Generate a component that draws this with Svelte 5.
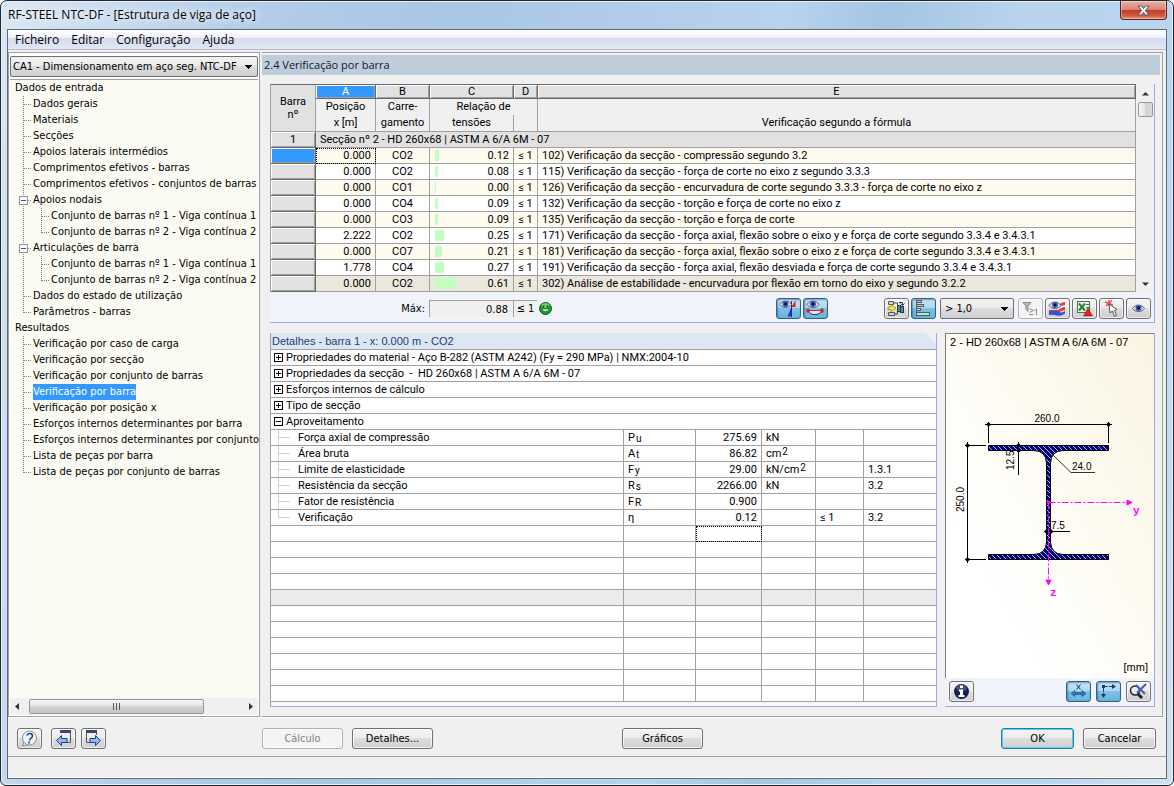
<script>
     let selected = $state('Verificação por barra');
     let activeRow = $state(0);

     const menu = ['Ficheiro', 'Editar', 'Configuração', 'Ajuda'];

     const tree = [
          { label: 'Dados de entrada', guides: [] },
          { label: 'Dados gerais', guides: ['tee'] },
          { label: 'Materiais', guides: ['tee'] },
          { label: 'Secções', guides: ['tee'] },
          { label: 'Apoios laterais intermédios', guides: ['tee'] },
          { label: 'Comprimentos efetivos - barras', guides: ['tee'] },
          { label: 'Comprimentos efetivos - conjuntos de barras', guides: ['tee'] },
          { label: 'Apoios nodais', guides: ['minus'] },
          { label: 'Conjunto de barras nº 1 - Viga contínua 1', guides: ['line', 'tee'] },
          { label: 'Conjunto de barras nº 2 - Viga contínua 2', guides: ['line', 'end'] },
          { label: 'Articulações de barra', guides: ['minus'] },
          { label: 'Conjunto de barras nº 1 - Viga contínua 1', guides: ['line', 'tee'] },
          { label: 'Conjunto de barras nº 2 - Viga contínua 2', guides: ['line', 'end'] },
          { label: 'Dados do estado de utilização', guides: ['tee'] },
          { label: 'Parâmetros - barras', guides: ['end'] },
          { label: 'Resultados', guides: [] },
          { label: 'Verificação por caso de carga', guides: ['tee'] },
          { label: 'Verificação por secção', guides: ['tee'] },
          { label: 'Verificação por conjunto de barras', guides: ['tee'] },
          { label: 'Verificação por barra', guides: ['tee'] },
          { label: 'Verificação por posição x', guides: ['tee'] },
          { label: 'Esforços internos determinantes por barra', guides: ['tee'] },
          { label: 'Esforços internos determinantes por conjunto', guides: ['tee'] },
          { label: 'Lista de peças por barra', guides: ['tee'] },
          { label: 'Lista de peças por conjunto de barras', guides: ['end'] }
     ];

     const checks = [
          { x: '0.000', lc: 'CO2', ratio: '0.12', text: '102) Verificação da secção - compressão segundo 3.2' },
          { x: '0.000', lc: 'CO2', ratio: '0.08', text: '115) Verificação da secção - força de corte no eixo z segundo 3.3.3' },
          { x: '0.000', lc: 'CO1', ratio: '0.00', text: '126) Verificação da secção - encurvadura de corte segundo 3.3.3 - força de corte no eixo z' },
          { x: '0.000', lc: 'CO4', ratio: '0.09', text: '132) Verificação da secção - torção e força de corte no eixo z' },
          { x: '0.000', lc: 'CO3', ratio: '0.09', text: '135) Verificação da secção - torção e força de corte' },
          { x: '2.222', lc: 'CO2', ratio: '0.25', text: '171) Verificação da secção - força axial, flexão sobre o eixo y e força de corte segundo 3.3.4 e 3.4.3.1' },
          { x: '0.000', lc: 'CO7', ratio: '0.21', text: '181) Verificação da secção - força axial, flexão sobre o eixo z e força de corte segundo 3.3.4 e 3.4.3.1' },
          { x: '1.778', lc: 'CO4', ratio: '0.27', text: '191) Verificação da secção - força axial, flexão desviada e força de corte segundo 3.3.4 e 3.4.3.1' },
          { x: '0.000', lc: 'CO2', ratio: '0.61', text: '302) Análise de estabilidade - encurvadura por flexão em torno do eixo y segundo 3.2.2' }
     ];

     const groups = [
          { label: 'Propriedades do material - Aço B-282 (ASTM A242) (Fy = 290 MPa) | NMX:2004-10', open: false },
          { label: 'Propriedades da secção  -  HD 260x68 | ASTM A 6/A 6M - 07', open: false },
          { label: 'Esforços internos de cálculo', open: false },
          { label: 'Tipo de secção', open: false },
          { label: 'Aproveitamento', open: true }
     ];

     const details = [
          { label: 'Força axial de compressão', sym: 'P', sub: 'u', value: '275.69', unit: 'kN' },
          { label: 'Área bruta', sym: 'A', sub: 't', value: '86.82', unit: 'cm', sup: '2' },
          { label: 'Limite de elasticidade', sym: 'F', sub: 'y', value: '29.00', unit: 'kN/cm', sup: '2', ref: '1.3.1' },
          { label: 'Resistência da secção', sym: 'R', sub: 's', value: '2266.00', unit: 'kN', ref: '3.2' },
          { label: 'Fator de resistência', sym: 'F', sub: 'R', value: '0.900' },
          { label: 'Verificação', sym: 'η', value: '0.12', limit: '≤ 1', ref: '3.2' }
     ];

     const emptyRows = Array.from({ length: 11 }, (_, i) => i);

     const barWidth = (ratio) => Math.max(1, Math.round(Number(ratio) * 34));
</script>

{#snippet guide(kind)}
     <svg class="guide" width="19" height="16" viewBox="0 0 19 16" fill="none" stroke="#808080" stroke-dasharray="1 1" shape-rendering="crispEdges">
          <path d={kind === 'end' ? 'M8.5 0V9' : 'M8.5 0V16'} />
          {#if kind !== 'line'}
               <path d="M9 8.5H17" />
          {/if}
          {#if kind === 'minus'}
               <rect x="4.5" y="4.5" width="8" height="8" rx="1" fill="#fff" stroke="#919191" stroke-dasharray="none" />
               <path d="M6 8.5H11" stroke="#3b4fa8" stroke-dasharray="none" />
          {/if}
     </svg>
{/snippet}

{#snippet eye(x, y)}
     <g transform="translate({x} {y})">
          <path d="M0 4.5C3 0 9 0 12 4.5C9 8.5 3 8.5 0 4.5Z" fill="#dfe3f2" stroke="#555d80" />
          <circle cx="6" cy="4" r="3" fill="#3c58b4" />
          <circle cx="6" cy="4" r="1.4" fill="#0b1238" />
     </g>
{/snippet}

<div class="window">
     <header class="titlebar">
          <h1>RF-STEEL NTC-DF - [Estrutura de viga de aço]</h1>
          <button class="close" aria-label="Fechar">
               <svg width="13" height="11" viewBox="0 0 13 11">
                    <path d="M1 1H4.5L6.5 3.5L8.5 1H12L8.5 5.5L12 10H8.5L6.5 7.5L4.5 10H1L4.5 5.5Z" fill="#f4f4f4" stroke="#54566a" />
               </svg>
          </button>
     </header>

     <div class="client">
          <nav class="menu">
               {#each menu as item}
                    <button>{item}</button>
               {/each}
          </nav>

          <div class="main">
               <aside class="sidebar">
                    <select class="case" aria-label="Caso de dimensionamento">
                         <option>CA1 - Dimensionamento em aço seg. NTC-DF</option>
                    </select>
                    <ul class="tree">
                         {#each tree as node}
                              <li>
                                   {#each node.guides as kind}
                                        {@render guide(kind)}
                                   {/each}
                                   <button class="node" class:selected={node.label === selected} onclick={() => (selected = node.label)}>{node.label}</button>
                              </li>
                         {/each}
                    </ul>
                    <div class="hscroll">
                         <svg width="15" height="15" viewBox="0 0 15 15"><path d="M9 4V11L5 7.5Z" fill="#333" /></svg>
                         <div class="track">
                              <div class="thumb"><i></i><i></i><i></i></div>
                         </div>
                         <svg width="15" height="15" viewBox="0 0 15 15"><path d="M6 4V11L10 7.5Z" fill="#333" /></svg>
                    </div>
               </aside>

               <section class="content">
                    <h2>2.4 Verificação por barra</h2>

                    <div class="results">
                         <div class="results-body">
                              <table class="checks">
                                   <colgroup>
                                        <col style="width: 45px" />
                                        <col style="width: 60px" />
                                        <col style="width: 54px" />
                                        <col style="width: 84px" />
                                        <col style="width: 24px" />
                                        <col />
                                   </colgroup>
                                   <thead>
                                        <tr class="letters">
                                             <th class="corner" rowspan="2">Barra<br />nº</th>
                                             <th class="active">A</th>
                                             <th>B</th>
                                             <th>C</th>
                                             <th>D</th>
                                             <th>E</th>
                                        </tr>
                                        <tr class="titles">
                                             <th>Posição<br />x [m]</th>
                                             <th>Carre-<br />gamento</th>
                                             <th class="ratio-title" colspan="2">
                                                  <span>Relação de</span>
                                                  <span class="second">tensões</span>
                                             </th>
                                             <th class="formula">Verificação segundo a fórmula</th>
                                        </tr>
                                   </thead>
                                   <tbody>
                                        <tr class="section">
                                             <th>1</th>
                                             <td colspan="5">Secção nº 2 - HD 260x68 | ASTM A 6/A 6M - 07</td>
                                        </tr>
                                        {#each checks as row, i}
                                             <tr class:active={i === activeRow} class:last={i === checks.length - 1} onclick={() => (activeRow = i)}>
                                                  <th></th>
                                                  <td class="num" class:focus={i === activeRow}>{row.x}</td>
                                                  <td class="center">{row.lc}</td>
                                                  <td>
                                                       <div class="ratio">
                                                            <span class="bar" style="width: {barWidth(row.ratio)}px"></span>
                                                            <span>{row.ratio}</span>
                                                       </div>
                                                  </td>
                                                  <td class="center">≤ 1</td>
                                                  <td>{row.text}</td>
                                             </tr>
                                        {/each}
                                   </tbody>
                              </table>
                              <div class="vscroll">
                                   <svg width="15" height="15" viewBox="0 0 15 15"><path d="M4 9.5H11L7.5 6Z" fill="#333" /></svg>
                                   <div class="vthumb"></div>
                                   <svg class="down" width="15" height="15" viewBox="0 0 15 15"><path d="M4 5.5H11L7.5 9Z" fill="#333" /></svg>
                              </div>
                         </div>

                         <div class="toolbar">
                              <label for="max">Máx:</label>
                              <input id="max" class="max" value="0.88" readonly />
                              <span class="limit">≤ 1</span>
                              <svg class="smiley" width="13" height="13" viewBox="0 0 13 13">
                                   <circle cx="6.5" cy="6.5" r="6" fill="#1e9a2c" stroke="#0c5d18" />
                                   <ellipse cx="6.5" cy="3.5" rx="4" ry="2.5" fill="#7fdc7c" opacity="0.8" />
                                   <circle cx="4.5" cy="4.5" r="1" fill="#083d0e" />
                                   <circle cx="8.5" cy="4.5" r="1" fill="#083d0e" />
                                   <path d="M2.5 7Q6.5 12 10.5 7Z" fill="#e6f7e4" stroke="#083d0e" stroke-width="0.5" />
                              </svg>

                              <div class="tools">
                                   <button class="tool on" aria-label="Diagramas na estrutura">
                                        <svg width="23" height="19" viewBox="0 0 23 19">
                                             <path d="M18.5 1V8L14.5 8Z" fill="#e02424" />
                                             <path d="M14 9L10.5 17.5H14Z" fill="#2434d8" />
                                             <path d="M14.5 2V18" stroke="#26304c" />
                                             {@render eye(2.5, 1)}
                                        </svg>
                                   </button>
                                   <button class="tool on" aria-label="Diagramas nas barras">
                                        <svg width="23" height="19" viewBox="0 0 23 19">
                                             {@render eye(3, 1)}
                                             <path d="M4 11.5C6 17 16 17 18 11.5" fill="#d7e9f7" stroke="#203050" />
                                             <path d="M3 11.5H19" stroke="#e02020" />
                                             <path d="M2.5 9.5H5.5V13.5H2.5ZM16.5 9.5H19.5V13.5H16.5Z" fill="#d62020" />
                                        </svg>
                                   </button>
                                   <span class="spacer"></span>
                                   <button class="tool" aria-label="Barras coloridas">
                                        <svg width="23" height="19" viewBox="0 0 23 19">
                                             <path d="M3.5 2.5H8.5V5.5H3.5ZM3.5 13.5H9.5V16.5H3.5Z" fill="#d4d4d4" stroke="#555" />
                                             <path d="M3 8H6V5.5L11 9L6 12.5V10.500H3Z" fill="#f5ee52" stroke="#8d8718" stroke-width="0.8" />
                                             <path d="M9 4H12.5V6M10 15H12.5V12" fill="none" stroke="#444" />
                                             <rect x="12.500" y="6.500" width="3" height="6" fill="#3fa062" stroke="#334" />
                                             <rect x="15.500" y="7.500" width="3" height="6" fill="#3c8ac0" stroke="#334" />
                                             <path d="M14 3.500H17.500V6M15.500 4.500L17.500 6.500L19.500 4.500" fill="none" stroke="#333" />
                                        </svg>
                                   </button>
                                   <button class="tool on" aria-label="Barras de relação">
                                        <svg width="23" height="19" viewBox="0 0 23 19" fill="none" stroke="#4d5c66">
                                             <path d="M4.5 1V17.5" />
                                             <rect x="4.500" y="1.500" width="5" height="2" fill="#e5b9b9" />
                                             <rect x="4.500" y="5.500" width="7" height="2" fill="#e5b9b9" />
                                             <rect x="4.500" y="9.500" width="4" height="2" fill="#e9ecec" />
                                             <rect x="4.500" y="13.500" width="13" height="3" fill="#b9e8c4" />
                                        </svg>
                                   </button>
                                   <select class="threshold" aria-label="Filtro da relação">
                                        <option>&gt; 1,0</option>
                                   </select>
                                   <button class="tool" disabled aria-label="Filtrar superiores a 1">
                                        <svg width="23" height="19" viewBox="0 0 23 19" fill="none" stroke="#8d8d8d">
                                             <path d="M4 3.5H12L9 7V12.5L7 10.5V7Z" fill="#b9b9b9" />
                                             <path d="M10.5 9.500L14.500 11.500L10.500 13.500M10 15.500H14.500M15.500 11.500L17.500 10V16" />
                                        </svg>
                                   </button>
                                   <button class="tool" aria-label="Escala de cores">
                                        <svg width="23" height="19" viewBox="0 0 23 19">
                                             <path d="M12 6Q16 3 19 3V6Q16 6 13 8Z" fill="#e03a3a" />
                                             <path d="M3 11H12Q16 8 19 8V11Q16 11 12 14H3Z" fill="#e03a3a" />
                                             <path d="M3 13Q8 10.500 12 12.500T19 12V14.500Q15 17.500 11 16.500T3 16Z" fill="#2f55d0" />
                                             {@render eye(3, 2)}
                                        </svg>
                                   </button>
                                   <button class="tool" aria-label="Exportar para Excel">
                                        <svg width="23" height="19" viewBox="0 0 23 19">
                                             <rect x="4.500" y="2.500" width="12" height="11" fill="#e8f3e6" stroke="#3b7d3a" />
                                             <path d="M6 4.500L12 11.500M12 4.500L6 11.500" stroke="#27803a" stroke-width="2" />
                                             <path d="M13 5.500H16M13 8.500H16" stroke="#3b7d3a" />
                                             <path d="M15 9L19.500 17H10.500Z" fill="#e0222a" stroke="#7d1014" stroke-width="0.5" />
                                        </svg>
                                   </button>
                                   <button class="tool" aria-label="Selecionar no gráfico">
                                        <svg width="23" height="19" viewBox="0 0 23 19">
                                             <path d="M5 3L13 6M12 1.500L6 7M9 1V7" stroke="#e05050" stroke-width="1.500" />
                                             <path d="M9 5L10 14L12.500 12L14.500 17.500L16.500 16.500L14.500 11.500L17 10.500Z" fill="#f6f6f6" stroke="#555" />
                                        </svg>
                                   </button>
                                   <button class="tool" aria-label="Modo de visualização">
                                        <svg width="23" height="19" viewBox="0 0 23 19">{@render eye(5.5, 5)}</svg>
                                   </button>
                              </div>
                         </div>
                    </div>

                    <div class="lower">
                         <div class="details">
                              <h3>Detalhes - barra 1 - x: 0.000 m - CO2</h3>
                              <table>
                                   <colgroup>
                                        <col />
                                        <col style="width: 72px" />
                                        <col style="width: 66px" />
                                        <col style="width: 54px" />
                                        <col style="width: 48px" />
                                        <col style="width: 72px" />
                                   </colgroup>
                                   <tbody>
                                        {#each groups as group}
                                             <tr>
                                                  <td class="group" colspan="6">
                                                       <button aria-expanded={group.open}>
                                                            <svg width="10" height="10" viewBox="0 0 10 10" fill="none" stroke="#000" shape-rendering="crispEdges">
                                                                 <rect x="0.5" y="0.5" width="8" height="8" fill="#fff" />
                                                                 <path d={group.open ? 'M2 4.5H7' : 'M2 4.5H7M4.5 2V7'} />
                                                            </svg>
                                                            <span>{group.label}</span>
                                                       </button>
                                                  </td>
                                             </tr>
                                        {/each}
                                        {#each details as row, i}
                                             <tr>
                                                  <td class="item">
                                                       <div class="branch">
                                                            <svg width="26" height="15" viewBox="0 0 26 15" fill="none" stroke="#d0d0d0" shape-rendering="crispEdges">
                                                                 <path d={i === details.length - 1 ? 'M7.5 0V8' : 'M7.5 0V15'} />
                                                                 <path d="M8 7.5H19" />
                                                            </svg>
                                                            <span>{row.label}</span>
                                                       </div>
                                                  </td>
                                                  <td>{row.sym}<span class="sub">{row.sub ?? ''}</span></td>
                                                  <td class="num">{row.value}</td>
                                                  <td>{row.unit ?? ''}<span class="sup">{row.sup ?? ''}</span></td>
                                                  <td>{row.limit ?? ''}</td>
                                                  <td>{row.ref ?? ''}</td>
                                             </tr>
                                        {/each}
                                        {#each emptyRows as i}
                                             <tr class:shaded={i === 4}>
                                                  <td></td>
                                                  <td></td>
                                                  <td class:focus={i === 0}></td>
                                                  <td></td>
                                                  <td></td>
                                                  <td></td>
                                             </tr>
                                        {/each}
                                   </tbody>
                              </table>
                         </div>

                         <div class="profile">
                              <div class="drawing">
                                   <svg width="209" height="344" viewBox="0 0 209 344" font-family="Liberation Sans, sans-serif" font-size="10">
                                        <defs>
                                             <pattern id="hatch" width="5" height="5" patternUnits="userSpaceOnUse">
                                                  <rect width="5" height="5" fill="#00007c" />
                                                  <path d="M-1 -1L6 6M-1 4L1 6M4 -1L6 1" stroke="#b4b4dc" />
                                             </pattern>
                                        </defs>
                                        <text x="4" y="12" font-size="11">2 - HD 260x68 | ASTM A 6/A 6M - 07</text>

                                        <path
                                             d="M42.5 111.5H162.5V116.5H117Q105 117 104.5 129V208Q105 220 117 220.5H162.5V225.5H42.5V220.5H88Q100 220 100.5 208V129Q100 117 88 116.5H42.5Z"
                                             fill="url(#hatch)"
                                             stroke="#000"
                                        />

                                        <g stroke="#000" fill="none">
                                             <path d="M39 90.5H166M42.5 88V109M162.5 88V109" />
                                             <path d="M21.5 108V229M19 111.5H40M19 225.5H40" />
                                             <path d="M72.5 108V141" />
                                             <path d="M98 197.5H124" />
                                             <path d="M107 121L125 138.5H149" stroke="#333" />
                                        </g>
                                        <path
                                             d="M42.5 88l2.5 2.5l-2.5 2.5l-2.5-2.5zM162.5 88l2.5 2.5l-2.5 2.5l-2.5-2.5zM21.5 109l2.5 2.5l-2.5 2.5l-2.5-2.5zM21.5 223l2.5 2.5l-2.5 2.5l-2.5-2.5zM72.5 109l2.5 2.5l-2.5 2.5l-2.5-2.5zM72.5 114l2.5 2.5l-2.5 2.5l-2.5-2.5zM100.5 195l2.5 2.5l-2.5 2.5l-2.5-2.5zM105 195l2.5 2.5l-2.5 2.5l-2.5-2.5z"
                                        />

                                        <g stroke="#f0f" fill="#f0f">
                                             <path d="M102.5 168.5H181" stroke-dasharray="7 2 2 2" />
                                             <path d="M102.5 168.5V246" stroke-dasharray="7 2 2 2" />
                                             <path d="M181 166V171L186 168.5ZM100 246H105L102.5 251Z" />
                                             <circle cx="102.5" cy="168.5" r="1.5" />
                                        </g>
                                        <g fill="#f0f" font-family="Liberation Mono, monospace" font-size="11" font-weight="bold">
                                             <text x="187" y="180">y</text>
                                             <text x="104" y="262">z</text>
                                        </g>

                                        <text x="101" y="88" text-anchor="middle">260.0</text>
                                        <text x="126" y="136">24.0</text>
                                        <text x="105" y="195">7.5</text>
                                        <text transform="translate(68 136) rotate(-90)">12.5</text>
                                        <text transform="translate(18 178) rotate(-90)">250.0</text>
                                        <text x="202" y="337" text-anchor="end" font-size="11">[mm]</text>
                                   </svg>
                              </div>
                              <div class="profile-tools">
                                   <button class="tool" aria-label="Informação">
                                        <svg width="23" height="19" viewBox="0 0 23 19">
                                             <circle cx="11.5" cy="9.5" r="7.5" fill="#16204e" />
                                             <ellipse cx="11.5" cy="6" rx="5.5" ry="3.5" fill="#6f7ca8" opacity="0.5" />
                                             <path d="M10 3.5H13V6H10ZM9 7.5H13V13H14.5V15H8.5V13H10V9.5H9Z" fill="#fff" />
                                        </svg>
                                   </button>
                                   <span class="spacer"></span>
                                   <button class="tool on" aria-label="Mostrar dimensões">
                                        <svg width="23" height="19" viewBox="0 0 23 19">
                                             <path d="M9.5 2.5L13.5 7.5M13.5 2.5L9.5 7.5" stroke="#1b2c44" />
                                             <path d="M4 11.5L8 8.5V10.5H15V8.5L19 11.5L15 14.5V12.5H8V14.5Z" fill="#3f6fc4" stroke="#1d3a74" stroke-width="0.5" />
                                        </svg>
                                   </button>
                                   <button class="tool on" aria-label="Mostrar eixos">
                                        <svg width="23" height="19" viewBox="0 0 23 19">
                                             <path d="M5 4.5H16M6.5 4V13" stroke="#1e3e63" stroke-dasharray="6 1" />
                                             <path d="M15 2L19 4.5L15 7ZM4 12H9L6.500 16ZM5 3H8V6H5Z" fill="#1e3e63" />
                                        </svg>
                                   </button>
                                   <button class="tool" aria-label="Repor zoom">
                                        <svg width="23" height="19" viewBox="0 0 23 19">
                                             <circle cx="8" cy="8.5" r="4.5" fill="#e9eef6" stroke="#222" stroke-width="1.5" />
                                             <path d="M11 12L15 16" stroke="#222" stroke-width="3" />
                                             <path d="M9 3L18 12M19 2L10 11" stroke="#3d5fb6" stroke-width="2" />
                                        </svg>
                                   </button>
                              </div>
                         </div>
                    </div>
               </section>
          </div>

          <footer class="actions">
               <button class="tool" aria-label="Ajuda">
                    <svg width="23" height="19" viewBox="0 0 23 19">
                         <path d="M6 13L4.5 17L10 15.5" fill="#eef1f6" stroke="#8a909c" />
                         <circle cx="11.5" cy="9" r="7" fill="#eef1f6" stroke="#8a909c" />
                         <path d="M9 6.5Q9.5 4.500 12 4.500T14.500 7Q14.500 8.500 12.500 9.500L11.500 11.500M11 12.500V14.500" fill="none" stroke="#22418c" stroke-width="1.500" />
                    </svg>
               </button>
               <div class="steps">
                    <button class="tool" aria-label="Máscara anterior">
                         <svg width="23" height="19" viewBox="0 0 23 19">
                              <path d="M8.5 2.5H18.5V13.5H14" fill="none" stroke="#555" />
                              <rect x="8" y="1" width="11" height="3" fill="#3a4570" />
                              <path d="M4.5 11.5L9.5 6.5V9.5H15V13.5H9.5V16.5Z" fill="#8fb6f0" stroke="#1e3f93" />
                         </svg>
                    </button>
                    <button class="tool" aria-label="Máscara seguinte">
                         <svg width="23" height="19" viewBox="0 0 23 19">
                              <path d="M14.5 2.5V6M4.5 2.5V13.5H8" fill="none" stroke="#555" />
                              <rect x="4" y="1" width="11" height="3" fill="#3a4570" />
                              <path d="M18.5 11.5L13.5 6.5V9.5H8V13.5H13.5V16.5Z" fill="#8fb6f0" stroke="#1e3f93" />
                         </svg>
                    </button>
               </div>
               <button class="btn calc" disabled>Cálculo</button>
               <button class="btn">Detalhes...</button>
               <span class="gap-left"></span>
               <button class="btn">Gráficos</button>
               <span class="gap-right"></span>
               <button class="btn small default">OK</button>
               <button class="btn small">Cancelar</button>
          </footer>
          <div class="status"></div>
     </div>
</div>

<style>
     :global(body) {
          margin: 0;
          background: #fff;
     }

     * {
          box-sizing: border-box;
     }

     button,
     select,
     input {
          font: inherit;
          color: inherit;
          margin: 0;
          padding: 0;
     }

     svg {
          display: block;
          flex: none;
     }

     h1,
     h2,
     h3,
     ul {
          margin: 0;
          padding: 0;
          font-weight: normal;
     }

     .window {
          min-height: 100vh;
          display: flex;
          flex-direction: column;
          padding: 0 6px 6px;
          border: 1px solid #23272e;
          border-radius: 7px 7px 6px 6px;
          background: linear-gradient(100deg, #dbe7f4 0%, #b5cee9 18%, #a9c6e3 35%, #b8d3ee 60%, #a5c5e2 68%, #b9d3ec 78%, #b9d5ef 90%, #d3e2f2 100%);
          box-shadow: inset 0 0 0 1px #e6f1fb;
          font-family: "DejaVu Sans Condensed", "Noto Sans", sans-serif;
          font-size: 11px;
          color: #000;
     }

     .titlebar {
          height: 28px;
          display: flex;
          justify-content: space-between;
          align-items: flex-start;
     }

     .titlebar h1 {
          padding-left: 1px;
          font: 12px/28px "Open Sans", "Noto Sans", sans-serif;
          text-shadow: 0 0 8px #fff, 0 0 8px #fff;
     }

     .close {
          width: 47px;
          height: 19px;
          display: flex;
          justify-content: center;
          align-items: center;
          border: 1px solid #5b1f1c;
          border-top: 0;
          border-radius: 0 0 4px 4px;
          background: linear-gradient(#e9b0a2 0%, #d98573 48%, #c03a24 50%, #d0573f 80%, #e8917a 100%);
          box-shadow: inset 0 0 0 1px rgba(255, 255, 255, 0.4);
     }

     .client {
          flex: 1;
          display: flex;
          flex-direction: column;
          border: 1px solid #5f6b78;
          background: #f0f0f0;
     }

     .menu {
          height: 20px;
          display: flex;
          gap: 12px;
          padding-left: 7px;
          border-bottom: 1px solid #b6bccc;
          background: linear-gradient(#fff 0%, #f0f2fa 40%, #d5dbee 42%, #e2e7f5 100%);
     }

     .menu button {
          border: 0;
          background: none;
          font: 12px/20px "Open Sans", "Noto Sans", sans-serif;
     }

     .main {
          flex: 1;
          display: flex;
          gap: 2px;
          margin-top: 2px;
          border-bottom: 1px solid #fff;
     }

     .sidebar {
          width: 252px;
          display: flex;
          flex-direction: column;
          padding: 3px 1px 1px;
          border: 1px solid #a0a0a0;
          background: #fff;
     }

     .case,
     .threshold {
          border: 1px solid #707070;
          border-radius: 2px;
          appearance: none;
          background:
               linear-gradient(to bottom right, #000 50%, transparent 50%) right 4px top 8px / 4px 4px no-repeat,
               linear-gradient(to bottom left, #000 50%, transparent 50%) right 8px top 8px / 4px 4px no-repeat,
               linear-gradient(#f2f2f2, #ebebeb 48%, #dddddd 50%, #cfcfcf);
     }

     .case {
          height: 21px;
          margin-bottom: 2px;
          padding: 0 2px;
     }

     .tree {
          flex: 1;
          padding-left: 5px;
          border-top: 1px solid #a0a0a0;
          background: #fbfbf3;
          list-style: none;
     }

     .tree li {
          height: 16px;
          display: flex;
     }

     .guide {
          margin-right: -1px;
     }

     .node {
          flex: none;
          height: 16px;
          border: 0;
          background: none;
          line-height: 16px;
          white-space: nowrap;
     }

     .node.selected {
          background: #3399ff;
          color: #fff;
     }

     .hscroll {
          height: 17px;
          display: flex;
          align-items: center;
          background: #f0f0f0;
     }

     .track {
          flex: 1;
          padding-left: 4px;
     }

     .thumb {
          width: 175px;
          height: 15px;
          display: flex;
          justify-content: center;
          align-items: center;
          gap: 2px;
          border: 1px solid #979797;
          border-radius: 2px;
          background: linear-gradient(#f4f4f4, #e6e6e6 48%, #d3d3d3 50%, #c6c6c6);
     }

     .thumb i {
          width: 1px;
          height: 7px;
          background: #555;
     }

     .content {
          flex: 1;
          min-width: 0;
          display: flex;
          flex-direction: column;
          margin-right: 3px;
          padding: 2px 2px 9px 0;
          border: 1px solid #a0a0a0;
          border-left: 0;
     }

     h2 {
          height: 20px;
          padding-left: 2px;
          background: #bfcddb;
          font: 11px/20px "Open Sans", "Noto Sans", sans-serif;
          color: #101830;
     }

     .results {
          margin: 9px 5px 0 8px;
          border-right: 1px solid #a4a4ec;
          border-bottom: 1px solid #a4a4ec;
     }

     .results-body {
          display: flex;
     }

     table {
          table-layout: fixed;
          width: 100%;
          border-collapse: separate;
          border-spacing: 0;
          font-family: Roboto, "Liberation Sans", sans-serif;
          font-size: 11px;
     }

     th,
     td {
          height: 16px;
          padding: 0 4px;
          border-right: 1px solid #a0a0a0;
          border-bottom: 1px solid #a0a0a0;
          font-weight: normal;
          text-align: left;
          line-height: 15px;
          white-space: nowrap;
          overflow: hidden;
     }

     .checks {
          flex: 1;
          min-width: 0;
          border-top: 1px solid #696969;
          border-left: 1px solid #a0a0a0;
     }

     .checks th {
          text-align: center;
          background: #e1e1e1;
     }

     .checks .letters th {
          height: 14px;
          line-height: 12px;
          border-color: #696969;
          box-shadow: inset 1px 1px #fff, inset -1px -1px #a0a0a0;
     }

     .checks .letters .active {
          background: #3399ff;
          color: #fff;
     }

     .checks .letters .corner {
          border-color: #a0a0a0;
          box-shadow: none;
          line-height: 13px;
     }

     .checks .titles th {
          height: 33px;
          padding: 0;
          line-height: 16px;
          vertical-align: top;
          background: #f0f0f0;
     }

     .ratio-title span {
          display: block;
     }

     .ratio-title .second {
          width: 84px;
          border-right: 1px solid #a0a0a0;
     }

     .checks .titles .formula {
          padding-top: 16px;
     }

     .checks tbody th {
          border-bottom-color: #696969;
          border-right-color: #696969;
          box-shadow: inset 1px 1px #fff, inset -1px -1px #a0a0a0;
     }

     .checks tbody tr:nth-child(even) {
          background: #fffaf0;
     }

     .checks tbody tr:nth-child(odd) {
          background: #fff;
     }

     .checks tbody tr.section {
          background: #e1e1e1;
     }

     .checks tbody tr.last {
          background: #ece7dd;
     }

     .checks tr.active th {
          background: #3399ff;
     }

     .num {
          text-align: right;
     }

     .center {
          padding: 0;
          text-align: center;
     }

     .focus {
          outline: 1px dotted #000;
          outline-offset: -1px;
     }

     .ratio {
          display: flex;
          justify-content: space-between;
          align-items: center;
     }

     .bar {
          height: 11px;
          margin-left: 1px;
          background: #c0ffc0;
     }

     .vscroll {
          width: 18px;
          display: flex;
          flex-direction: column;
          align-items: center;
          padding-top: 2px;
          background: #f0f0f0;
     }

     .vthumb {
          width: 15px;
          height: 15px;
          margin-top: 1px;
          border: 1px solid #979797;
          border-radius: 2px;
          background: linear-gradient(to right, #f4f4f4, #e6e6e6 48%, #d3d3d3 50%, #d8d8d8);
     }

     .down {
          margin-top: auto;
     }

     .toolbar {
          height: 30px;
          display: flex;
          align-items: center;
          padding: 3px 3px 0 0;
          background: #f0f4fa;
     }

     .toolbar label {
          width: 155px;
          margin-right: 4px;
          text-align: right;
     }

     .max {
          width: 84px;
          height: 17px;
          padding-right: 5px;
          border: 0;
          border-left: 1px solid #a0a0a0;
          border-top: 1px solid #a0a0a0;
          background: #f0f0f0;
          text-align: right;
     }

     .limit {
          width: 24px;
          height: 17px;
          border-left: 1px solid #a0a0a0;
          border-top: 1px solid #a0a0a0;
          background: #f0f0f0;
          line-height: 16px;
          text-align: center;
     }

     .smiley {
          margin-left: 2px;
     }

     .tools {
          flex: 1;
          display: flex;
          justify-content: flex-end;
          gap: 2px;
     }

     .tools .spacer {
          width: 52px;
     }

     .tool {
          width: 25px;
          height: 21px;
          flex: none;
          border: 1px solid #707070;
          border-radius: 3px;
          background: linear-gradient(#f4f4f4, #ececec 48%, #dddddd 50%, #cfcfcf);
          box-shadow: inset 0 0 0 1px rgba(255, 255, 255, 0.6);
     }

     .tool.on {
          border-color: #2c628b;
          background: linear-gradient(#cbe6f6, #a9d8f1 48%, #7ec2e5 50%, #68b3db);
          box-shadow: inset 1px 1px 2px rgba(30, 70, 110, 0.5);
     }

     .tool:disabled {
          border-color: #adb2b5;
          background: #f4f4f4;
     }

     .threshold {
          width: 74px;
          height: 21px;
          margin: 0 2px;
          padding: 0 4px;
     }

     .lower {
          flex: 1;
          display: flex;
          gap: 8px;
          margin: 10px 5px 0 8px;
     }

     .details {
          flex: 1;
          min-width: 0;
          border-right: 1px solid #a4a4ec;
          border-bottom: 1px solid #a4a4ec;
          border-left: 1px solid #a0a0a0;
          background: #f4f8fa;
     }

     h3 {
          height: 17px;
          padding-left: 1px;
          border-bottom: 1px solid #a0a0a0;
          background: linear-gradient(225deg, #f0f0f0 7px, #dce6f4 8px);
          font: 11px/16px "Liberation Sans", sans-serif;
          color: #1f3f70;
     }

     .details td {
          background: #fff;
     }

     .details td:last-child {
          border-right: 0;
     }

     .details .group,
     .details .item {
          padding: 0;
     }

     .group button {
          display: flex;
          align-items: center;
          gap: 2px;
          padding-left: 3px;
          border: 0;
          background: none;
          line-height: 15px;
          white-space: pre;
     }

     .branch {
          display: flex;
          gap: 1px;
     }

     .details .shaded td {
          background: #ebebeb;
     }

     .sub {
          margin-left: 1px;
          font-size: 10px;
          vertical-align: -1px;
          line-height: 10px;
     }

     .sup {
          margin-left: 1px;
          font-size: 10px;
          vertical-align: 2px;
          line-height: 10px;
     }

     .profile {
          width: 210px;
          display: flex;
          flex-direction: column;
          border-right: 1px solid #a4a4ec;
          border-bottom: 1px solid #a4a4ec;
     }

     .drawing {
          flex: 1;
          border-top: 1px solid #808080;
          border-left: 1px solid #808080;
          background: linear-gradient(60deg, #fff 25%, #fdfbf0 60%, #faf4e2 100%);
     }

     .profile-tools {
          height: 28px;
          display: flex;
          gap: 5px;
          padding: 3px 3px 0 4px;
          background: #f0f4fa;
     }

     .profile-tools .spacer {
          flex: 1;
     }

     .actions {
          height: 38px;
          display: flex;
          align-items: center;
          gap: 9px;
          padding: 2px 10px 0 9px;
     }

     .steps {
          display: flex;
          gap: 5px;
     }

     .btn {
          width: 81px;
          height: 21px;
          border: 1px solid #707070;
          border-radius: 3px;
          background: linear-gradient(#f4f4f4, #ececec 48%, #dddddd 50%, #cfcfcf);
          box-shadow: inset 0 0 0 1px rgba(255, 255, 255, 0.7);
     }

     .btn.small {
          width: 73px;
     }

     .btn.calc {
          margin-left: 147px;
     }

     .btn:disabled {
          border-color: #adb2b5;
          background: #f4f4f4;
          color: #838383;
     }

     .btn.default {
          border-color: #2c7ba0;
          box-shadow: inset 0 0 0 1px #4fd0f4;
     }

     .gap-left {
          flex: 171;
     }

     .gap-right {
          flex: 280;
     }

     .status {
          height: 22px;
          border-top: 1px solid #a0a0a0;
          border-bottom: 1px solid #fff;
     }
</style>
